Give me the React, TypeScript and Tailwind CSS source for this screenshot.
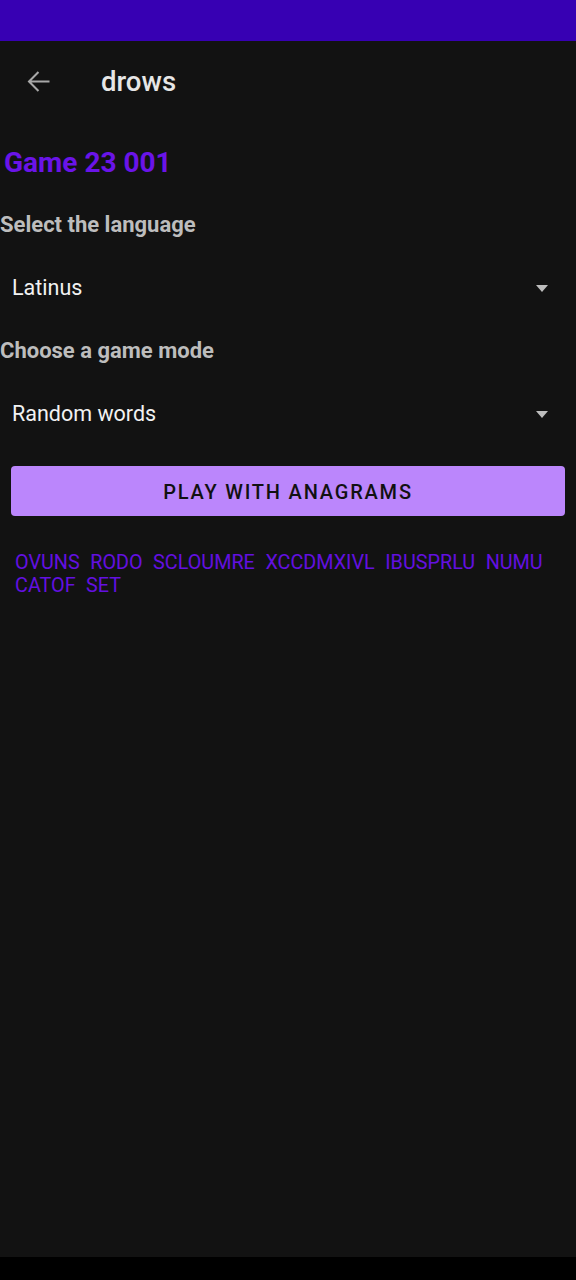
import { useState } from 'react';

const WORDS = ['OVUNS', 'RODO', 'SCLOUMRE', 'XCCDMXIVL', 'IBUSPRLU', 'NUMU', 'CATOF', 'SET'];

function Dropdown({ value }: { value: string }) {
  return (
    <div className="h-[100px] flex items-center justify-between pl-[12px] pr-[28px]">
      <span className="text-[21.5px] text-[#f2f2f2]">{value}</span>
      <svg width="12" height="7" viewBox="0 0 12 7" className="fill-[#bdbdbd]">
        <path d="M0 0h12L6 7z" />
      </svg>
    </div>
  );
}

export default function App() {
  const [words] = useState(WORDS);

  return (
    <div className="h-[1280px] flex flex-col bg-[#121212] font-['Roboto',sans-serif]">
      {/* status bar */}
      <div className="h-[41px] bg-[#3700B3] shrink-0" />

      {/* toolbar */}
      <div className="h-[80px] flex items-center shrink-0">
        <div className="w-[101px] flex items-center pl-[22px] pt-[1px]">
          <svg width="33" height="33" viewBox="0 0 24 24" className="fill-[#a8a8a8]">
            <path d="M20 11.25H6.9l5.6-5.6L11.45 4.6 4.05 12l7.4 7.4 1.05-1.05-5.6-5.6H20v-1.5z" />
          </svg>
        </div>
        <h1 className="text-[27.5px] leading-[34px] pt-[2px] font-medium text-[#e6e6e6]">drows</h1>
      </div>

      <div className="flex-1">
        <h2 className="pl-[4px] mt-[22px] text-[28px] leading-[40px] font-bold text-[#6a14e8]">Game 23 001</h2>

        <p className="mt-[29px] text-[22px] leading-[26px] font-bold text-[#bdbdbd]">Select the language</p>
        <Dropdown value="Latinus" />

        <p className="text-[22px] leading-[26px] font-bold text-[#bdbdbd]">Choose a game mode</p>
        <Dropdown value="Random words" />

        <div className="px-[11px] mt-[2px]">
          <button className="w-full h-[50px] rounded-[4px] bg-[#bb86fc] text-[20px] leading-[24px] pt-[2px] font-medium tracking-[0.09em] text-[#111]">
            PLAY WITH ANAGRAMS
          </button>
        </div>

        <div className="mt-[35px] pl-[15px] pr-[20px] flex flex-wrap gap-x-[10.5px] text-[19.8px] leading-[23px] text-[#6310e0]">
          {words.map((w) => (
            <span key={w}>{w}</span>
          ))}
        </div>
      </div>

      {/* nav bar */}
      <div className="h-[23px] bg-black shrink-0" />
    </div>
  );
}
